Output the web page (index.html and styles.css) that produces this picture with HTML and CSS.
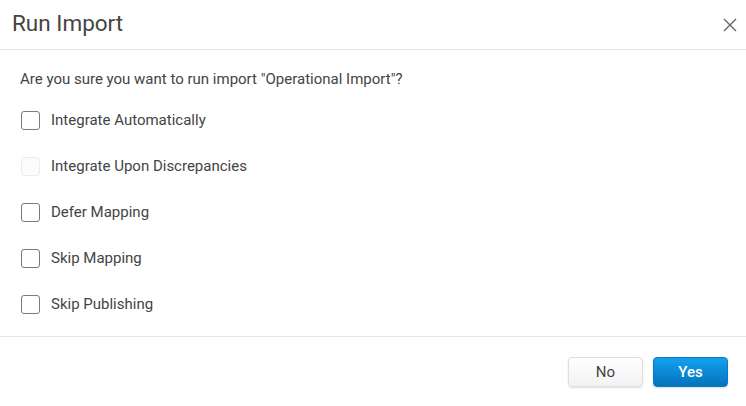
FILE: index.html
```html
<!DOCTYPE html>
<html lang="en">
<head>
  <meta charset="UTF-8">
  <meta name="viewport" content="width=device-width, initial-scale=1.0">
  <title>Run Import</title>
  <link rel="stylesheet" href="styles.css">
</head>
<body>

  <div class="dialog">
    <!-- Header -->
    <div class="dialog-header">
      <h2>Run Import</h2>
      <button class="close-btn" aria-label="Close">
        <svg width="14" height="14" viewBox="0 0 14 14">
          <path d="M1 1 L13 13 M13 1 L1 13" stroke="#666" stroke-width="1.4" fill="none"/>
        </svg>
      </button>
    </div>

    <!-- Body -->
    <div class="dialog-body">
      <p class="question">Are you sure you want to run import "Operational Import"?</p>

      <label class="option">
        <input type="checkbox">
        <span class="box"></span>
        Integrate Automatically
      </label>

      <label class="option disabled">
        <input type="checkbox" disabled>
        <span class="box"></span>
        Integrate Upon Discrepancies
      </label>

      <label class="option">
        <input type="checkbox">
        <span class="box"></span>
        Defer Mapping
      </label>

      <label class="option">
        <input type="checkbox">
        <span class="box"></span>
        Skip Mapping
      </label>

      <label class="option">
        <input type="checkbox">
        <span class="box"></span>
        Skip Publishing
      </label>
    </div>

    <!-- Footer -->
    <div class="dialog-footer">
      <button class="btn btn-no">No</button>
      <button class="btn btn-yes">Yes</button>
    </div>
  </div>

</body>
</html>
```

FILE: styles.css
```css
body {
  margin: 0;
  padding: 0;
  background-color: white;
  font-family: Roboto, "Liberation Sans", sans-serif;
  color: #444;
}

.dialog {
  width: 746px;
  height: 406px;
  background-color: white;
  box-sizing: border-box;
}

.dialog-header {
  height: 49px;
  border-bottom: 1px solid #e6e6e6;
  display: flex;
  align-items: center;
  justify-content: space-between;
  padding: 0 9px 0 12px;
}

.dialog-header h2 {
  margin: 0;
  font-size: 22.5px;
  font-weight: 400;
  color: #444;
  line-height: 1;
  padding-bottom: 2px;
}

.close-btn {
  background: none;
  border: none;
  padding: 0;
  width: 14px;
  height: 14px;
  cursor: pointer;
  display: flex;
}

.dialog-body {
  padding: 19px 20px 9px 20px;
  border-bottom: 1px solid #e6e6e6;
}

.question {
  margin: 0 0 8px;
  font-size: 15px;
  line-height: 20px;
}

.option {
  display: flex;
  align-items: center;
  height: 46px;
  font-size: 15px;
  color: #444;
  cursor: pointer;
}

.option input {
  display: none;
}

.option .box {
  width: 17px;
  height: 17px;
  border: 1.5px solid #7a7a7a;
  border-radius: 3px;
  margin: 0 11px 0 1px;
  box-sizing: content-box;
}

.option.disabled .box {
  border-color: #ececec;
  background-color: #fbfbfb;
}

.dialog-footer {
  display: flex;
  justify-content: flex-end;
  gap: 10px;
  padding: 20px 18px 0 0;
}

.btn {
  width: 75px;
  height: 30px;
  border-radius: 4px;
  font-family: Roboto, "Liberation Sans", sans-serif;
  font-size: 15px;
  cursor: pointer;
}

.btn-no {
  background: linear-gradient(#ffffff, #f2f2f2);
  border: 1px solid #dedede;
  color: #444;
  box-shadow: 0 1px 2px rgba(0, 0, 0, 0.12);
}

.btn-yes {
  background: linear-gradient(#13a1ee, #0572bd);
  border: 1px solid #0a78c2;
  color: white;
  font-weight: 500;
  box-shadow: 0 1px 2px rgba(0, 0, 0, 0.15);
}
```
